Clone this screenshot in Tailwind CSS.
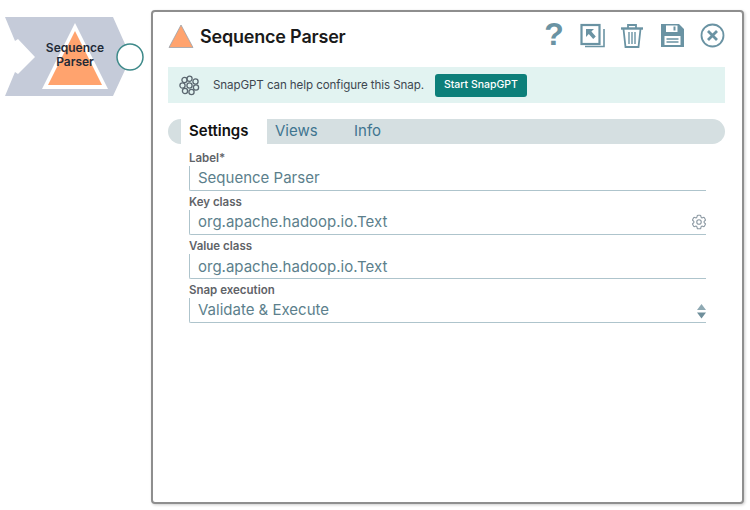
<!DOCTYPE html>
<html lang="en">
<head>
    <meta charset="UTF-8">
    <title>Sequence Parser</title>
    <script src="https://cdn.jsdelivr.net/npm/@tailwindcss/browser@4"></script>
</head>
<body class="bg-white w-[750px] h-[510px] overflow-hidden relative font-['Inter',sans-serif]">
    <!-- Snap on the canvas -->
    <div class="absolute left-0 top-0 w-[150px] h-[100px]">
        <svg width="150" height="100" viewBox="0 0 150 100" class="absolute left-0 top-0">
            <polygon points="5,17 113,17 125,44 125,70 113,96 5,96 15,72 18,74 35,57 18,39 15,41" fill="#c5cbd9"/>
            <polygon points="75,23 108,89 42,89" fill="#ffffff"/>
            <polygon points="75,31 102,85 48,85" fill="#ffa36e"/>
            <circle cx="130" cy="57" r="13" fill="#ffffff" stroke="#3e8a8a" stroke-width="1.5"/>
        </svg>
        <div class="absolute left-[35px] top-[41px] w-[80px] text-center text-[12px] leading-[14px] font-semibold text-[#1f2a37]">Sequence<br>Parser</div>
    </div>

    <!-- Settings panel -->
    <div class="absolute left-[151px] top-[10px] w-[593px] h-[494px] bg-white border-2 border-[#8e8e8e] rounded-[4px] shadow-[1px_1px_3px_rgba(0,0,0,0.2)] pl-[15px] pr-[17px]">
        <!-- Title row -->
        <div class="flex items-center h-[47px]">
            <svg width="26" height="24" viewBox="0 0 26 24" class="mr-[6px]">
                <polygon points="13,1 25,23.5 1,23.5" fill="#ffa36e" stroke="#9aa3ad" stroke-width="0.8"/>
            </svg>
            <h1 class="text-[18px] font-semibold text-[#1a1a1a] tracking-[-0.2px] mt-[1px]">Sequence Parser</h1>
            <div class="ml-auto flex items-center gap-[15px] text-[#6a93a3]">
                <span class="text-[32px] font-bold leading-none w-[24px] text-center font-['Liberation_Sans',sans-serif] -mt-[3px] ml-[1px]">?</span>
                <svg width="25" height="26" viewBox="0 0 25 26" fill="none" stroke="currentColor" class="-ml-[1px]">
                    <path d="M5 23.500H24V6" stroke-width="1.6"/>
                    <rect x="1.500" y="2" width="18" height="19" stroke-width="2.2"/>
                    <path d="M6 6h8l-2.600 2.600 4.400 5-2.600 2.400-4.400-5L6 14z" fill="currentColor" stroke="none"/>
                </svg>
                <svg width="24" height="26" viewBox="0 0 24 26" fill="none" stroke="currentColor" stroke-width="1.8">
                    <path d="M1 5.500H23" stroke-width="2.4"/>
                    <path d="M8 5V2H16V5"/>
                    <path d="M3.500 6L5.500 24H18.500L20.500 6"/>
                    <path d="M9 9V21M12 9V21M15 9V21" stroke-width="1.4"/>
                </svg>
                <svg width="24" height="25" viewBox="0 0 24 25" class="ml-[1px]">
                    <path fill="currentColor" fill-rule="evenodd" d="M1 1H19L24 6V24H1ZM6 2.500V9H17.500V2.500ZM13.500 3.500H15.500V7.500H13.500ZM4.500 13V22H20.500V13Z"/>
                    <path d="M6.500 16H18.500M6.500 19H18.500" stroke="currentColor" stroke-width="1.6"/>
                </svg>
                <svg width="25" height="25" viewBox="0 0 25 25" fill="none" stroke="currentColor" class="ml-[1px]">
                    <circle cx="12.500" cy="12.500" r="11" stroke-width="1.8"/>
                    <path d="M8 8L17 17M17 8L8 17" stroke-width="2.800"/>
                </svg>
            </div>
        </div>

        <!-- SnapGPT banner -->
        <div class="flex items-center h-[36px] bg-[#e2f3f1] mt-[8px] pl-[11px]">
            <svg width="21" height="21" viewBox="0 0 21 21" fill="none" stroke="#5b6770" stroke-width="1.3">
                <circle cx="10.500" cy="3.800" r="2.600"/>
                <circle cx="16.500" cy="6.500" r="2.600"/>
                <circle cx="17" cy="12.500" r="2.600"/>
                <circle cx="12.500" cy="17" r="2.600"/>
                <circle cx="6" cy="16" r="2.600"/>
                <circle cx="3.500" cy="10.500" r="2.600"/>
                <circle cx="5.500" cy="5" r="2.600"/>
                <circle cx="10.500" cy="10.500" r="2.600"/>
            </svg>
            <span class="ml-[13px] mt-[1px] text-[11.600px] text-[#3d4750] tracking-[-0.1px]">SnapGPT can help configure this Snap.</span>
            <button class="ml-[11px] w-[92px] h-[23px] rounded-[3px] bg-[#0d7f7a] text-white text-[10.500px] font-medium">Start SnapGPT</button>
        </div>

        <!-- Tabs -->
        <div class="flex h-[25px] mt-[16px] bg-[#d5dfe1] rounded-full overflow-hidden pl-[13px] text-[15px] leading-[24px]">
            <div class="w-[86px] bg-white pl-[8px] font-semibold text-[#111111]">Settings</div>
            <div class="w-[79px] pl-[8px] text-[#3f7590]">Views</div>
            <div class="pl-[8px] text-[#3f7590]">Info</div>
        </div>

        <!-- Fields -->
        <div class="ml-[21px] mr-[19px] mt-[6px] flex flex-col">
            <div class="h-[44px]">
                <div class="text-[11.500px] leading-[16px] font-semibold text-[#5f6368]">Label*</div>
                <div class="h-[25px] border-l border-b border-[#aec4cc] rounded-bl-[2px] pl-[8px] text-[15px] leading-[23px] text-[#5c7f8c]">Sequence Parser</div>
            </div>
            <div class="h-[44px]">
                <div class="text-[11.500px] leading-[16px] font-semibold text-[#5f6368]">Key class</div>
                <div class="h-[25px] border-l border-b border-[#aec4cc] rounded-bl-[2px] pl-[8px] text-[15px] leading-[23px] text-[#5c7f8c] flex items-start justify-between">
                    <span>org.apache.hadoop.io.Text</span>
                    <svg width="18" height="18" viewBox="0 0 24 24" fill="none" stroke="#8c99a3" stroke-width="1.5" class="-mr-[2px] self-center">
                        <path stroke-linejoin="round" d="M9.594 3.940c.09-.542.56-.94 1.110-.94h2.593c.55 0 1.020.398 1.110.94l.213 1.281c.063.374.313.686.645.87.074.04.147.083.22.127.325.196.72.257 1.075.124l1.217-.456a1.125 1.125 0 0 1 1.370.49l1.296 2.247a1.125 1.125 0 0 1-.26 1.431l-1.003.827c-.293.241-.438.613-.43.992a7.723 7.723 0 0 1 0 .255c-.008.378.137.75.43.991l1.004.827c.424.35.534.955.26 1.430l-1.298 2.247a1.125 1.125 0 0 1-1.369.491l-1.217-.456c-.355-.133-.75-.072-1.076.124a6.470 6.470 0 0 1-.22.128c-.331.183-.581.495-.644.869l-.213 1.281c-.09.543-.56.94-1.110.94h-2.594c-.55 0-1.019-.398-1.110-.94l-.213-1.281c-.062-.374-.312-.686-.644-.87a6.520 6.520 0 0 1-.22-.127c-.325-.196-.72-.257-1.076-.124l-1.217.456a1.125 1.125 0 0 1-1.369-.49l-1.297-2.247a1.125 1.125 0 0 1 .26-1.431l1.004-.827c.292-.24.437-.613.43-.991a6.932 6.932 0 0 1 0-.255c.007-.38-.138-.751-.43-.992l-1.004-.827a1.125 1.125 0 0 1-.26-1.430l1.297-2.247a1.125 1.125 0 0 1 1.370-.491l1.216.456c.356.133.751.072 1.076-.124.072-.044.146-.086.22-.128.332-.183.582-.495.644-.869l.214-1.280Z"/>
                        <circle cx="12" cy="12" r="3"/>
                    </svg>
                </div>
            </div>
            <div class="h-[44px]">
                <div class="text-[11.500px] leading-[16px] font-semibold text-[#5f6368]">Value class</div>
                <div class="h-[25px] border-l border-b border-[#aec4cc] rounded-bl-[2px] pl-[8px] text-[15px] leading-[25px] text-[#5c7f8c]">org.apache.hadoop.io.Text</div>
            </div>
            <div class="h-[44px]">
                <div class="text-[11.500px] leading-[16px] font-semibold text-[#5f6368]">Snap execution</div>
                <div class="h-[25px] border-l border-b border-[#aec4cc] rounded-bl-[2px] pl-[8px] text-[15px] leading-[23px] text-[#5c7f8c] flex items-start justify-between">
                    <span>Validate &amp; Execute</span>
                    <svg width="9" height="15" viewBox="0 0 9 15" class="mt-[6px]">
                        <polygon points="4.500,0 9,6 0,6" fill="#8fa9b3"/>
                        <polygon points="0,8.500 9,8.500 4.500,14.500" fill="#6f8f9b"/>
                    </svg>
                </div>
            </div>
        </div>
    </div>
</body>
</html>
